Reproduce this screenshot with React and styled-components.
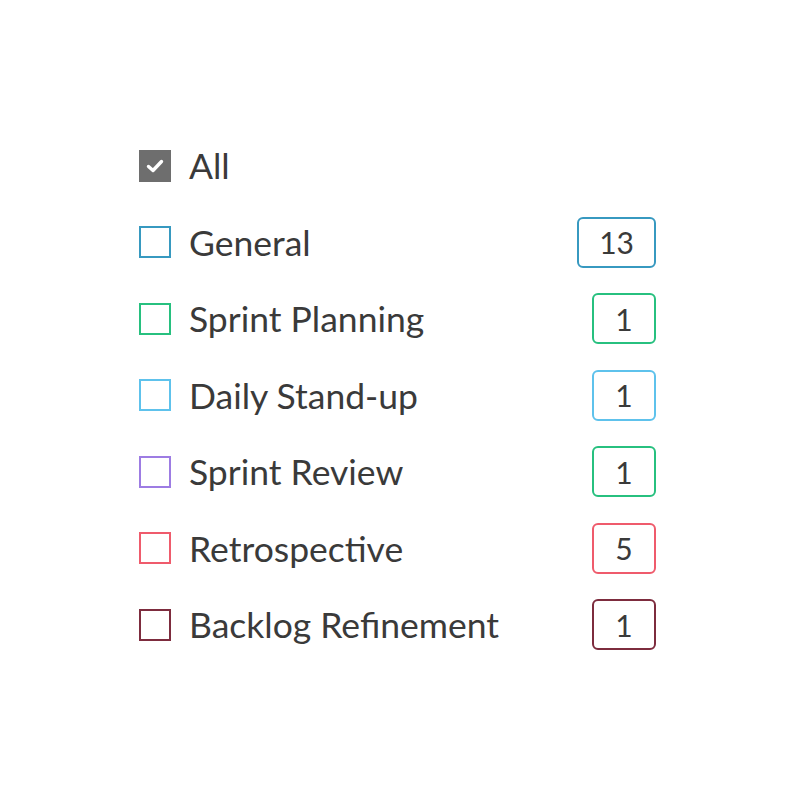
import styled, { createGlobalStyle } from "styled-components";

const GlobalStyle = createGlobalStyle`
  html, body {
    margin: 0;
    padding: 0;
    background: #ffffff;
    font-family: Lato, "Open Sans", sans-serif;
  }
`;

const Page = styled.div`
  width: 800px;
  height: 800px;
  box-sizing: border-box;
  padding: 140px 0 0 139px;
`;

const List = styled.ul`
  list-style: none;
  margin: 0;
  padding: 0;
  width: 517px;
  display: flex;
  flex-direction: column;
  gap: 25.5px;
`;

const Row = styled.li`
  display: flex;
  align-items: center;
  min-height: 51px;
  cursor: pointer;
`;

const Box = styled.span`
  width: 32px;
  height: 32px;
  box-sizing: border-box;
  border: 2px solid ${(p) => p.$color};
  background: ${(p) => (p.$checked ? p.$color : "#fff")};
  display: flex;
  align-items: center;
  justify-content: center;
  flex-shrink: 0;
`;

const Label = styled.span`
  margin-left: 18px;
  font-size: 35.5px;
  color: #3a3a3a;
  flex: 1;
`;

const Badge = styled.span`
  min-width: 64px;
  height: 51px;
  box-sizing: border-box;
  padding: 0 20px;
  border: 2px solid ${(p) => p.$color};
  border-radius: 6px;
  display: flex;
  align-items: center;
  justify-content: center;
  font-size: 30px;
  color: #3a3a3a;
`;

const categories = [
  { name: "General", color: "#3799c0", badge: "#3799c0", count: 13 },
  { name: "Sprint Planning", color: "#27c07f", badge: "#27c07f", count: 1 },
  { name: "Daily Stand-up", color: "#5ec2ec", badge: "#5ec2ec", count: 1 },
  { name: "Sprint Review", color: "#9d7ce3", badge: "#27c07f", count: 1 },
  { name: "Retrospective", color: "#ef5b6c", badge: "#ef5b6c", count: 5 },
  { name: "Backlog Refinement", color: "#7d2c3e", badge: "#7d2c3e", count: 1 },
];

const Check = () => (
  <svg width="18" height="14" viewBox="0 0 18 14">
    <path
      d="M2.5 7.5 L7 11.5 L15.5 2.5"
      fill="none"
      stroke="#fff"
      strokeWidth="3.4"
      strokeLinecap="round"
      strokeLinejoin="round"
    />
  </svg>
);

export default function App() {
  return (
    <Page>
      <GlobalStyle />
      <List>
        <Row>
          <Box $color="#6e6e6e" $checked>
            <Check />
          </Box>
          <Label>All</Label>
        </Row>
        {categories.map((c) => (
          <Row key={c.name}>
            <Box $color={c.color} />
            <Label>{c.name}</Label>
            <Badge $color={c.badge}>{c.count}</Badge>
          </Row>
        ))}
      </List>
    </Page>
  );
}
